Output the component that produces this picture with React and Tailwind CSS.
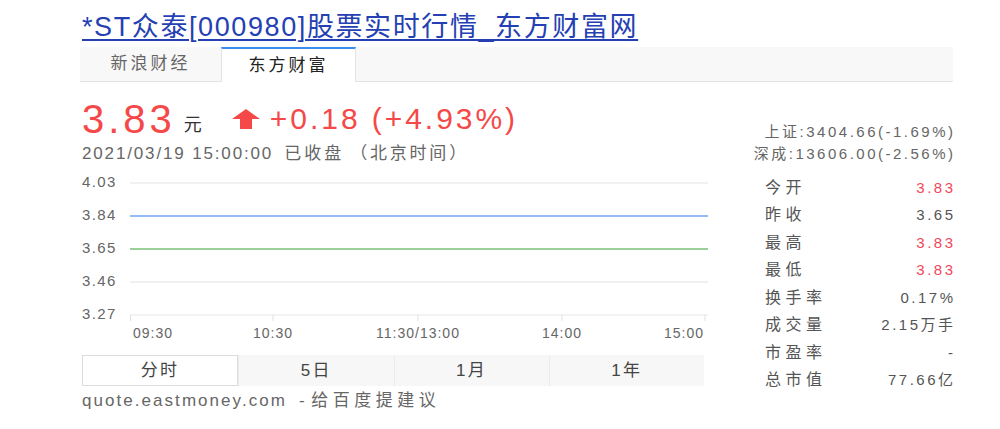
import React from 'react';

const FONT = { fontFamily: '"Liberation Sans", "Noto Sans CJK SC", sans-serif' };

// 行情数据
const stats = [
  { label: '今开', value: '3.83', up: true },
  { label: '昨收', value: '3.65' },
  { label: '最高', value: '3.83', up: true },
  { label: '最低', value: '3.83', up: true },
  { label: '换手率', value: '0.17%' },
  { label: '成交量', value: '2.15万手' },
  { label: '市盈率', value: '-' },
  { label: '总市值', value: '77.66亿' },
];

const yLabels = ['4.03', '3.84', '3.65', '3.46', '3.27'];

const xLabels = [
  { text: '09:30', left: 51 },
  { text: '10:30', left: 171 },
  { text: '11:30/13:00', left: 294 },
  { text: '14:00', left: 460 },
  { text: '15:00', left: 582 },
];

const ranges = ['分时', '5日', '1月', '1年'];

const UpArrow = () => (
  <svg width="28" height="20" viewBox="0 0 28 20" className="shrink-0">
    <polygon points="14,0 28,10 20,10 20,20 8,20 8,10 0,10" fill="#f54848" />
  </svg>
);

const Chart = () => (
  <div className="relative h-[180px] w-[626px]">
    {/* y 轴 */}
    <div className="absolute left-0 top-0 flex flex-col">
      {yLabels.map((v) => (
        <div key={v} className="h-[33px] flex items-center text-[15px] tracking-[1.4px] text-[#666]">
          {v}
        </div>
      ))}
    </div>
    <svg className="absolute left-[48px] top-[16px]" width="580" height="142" viewBox="0 0 580 142">
      <line x1="0" y1="1" x2="578" y2="1" stroke="#ececec" strokeWidth="1.5" />
      <line x1="0" y1="100" x2="578" y2="100" stroke="#ececec" strokeWidth="1.5" />
      <line x1="0" y1="133" x2="578" y2="133" stroke="#e6e6e6" strokeWidth="1" />
      <line x1="0" y1="34" x2="578" y2="34" stroke="#2f7bf2" strokeWidth="1.2" />
      <line x1="0" y1="67" x2="578" y2="67" stroke="#9ad19a" strokeWidth="2" />
      {[0.5, 143, 288, 432, 575].map((x) => (
        <line key={x} x1={x} y1="133" x2={x} y2="139" stroke="#e0e0e0" strokeWidth="1" />
      ))}
    </svg>
    {xLabels.map((l) => (
      <span
        key={l.text}
        className="absolute top-[160px] text-[14px] tracking-[1px] text-[#666] leading-none"
        style={{ left: l.left }}
      >
        {l.text}
      </span>
    ))}
  </div>
);

export default function App() {
  return (
    <div className="w-[1000px] h-[429px] bg-white overflow-hidden" style={FONT}>
      <div className="ml-[80px] w-[873px]">
        {/* 标题 */}
        <div className="pt-[11px] pl-[2px] h-[47px]">
          <a className="text-[27px] leading-[32px] tracking-[1.6px] text-[#2440b3] underline underline-offset-[3px] decoration-[1.5px]">
            *ST众泰[000980]股票实时行情_东方财富网
          </a>
        </div>

        {/* 来源标签 */}
        <div className="flex h-[35px] bg-[#f8f8f8] border-b border-[#e3e3e3]">
          <div className="w-[141px] flex items-center justify-center text-[17px] tracking-[3px] text-[#666]">
            新浪财经
          </div>
          <div className="w-[135px] -mb-px bg-white border-t-2 border-t-[#3b8cf0] border-x border-x-[#e3e3e3] flex items-center justify-center text-[17px] tracking-[3px] text-[#222]">
            东方财富
          </div>
        </div>

        <div className="flex">
          {/* 左侧 */}
          <div className="w-[630px] pl-[2px]">
            <div className="flex items-center h-[58px] pt-[16px] text-[#f54848]">
              <span className="text-[40px] tracking-[4px] leading-none">3.83</span>
              <span className="ml-[8px] mt-[12px] text-[18px] tracking-[2px] text-[#333]">元</span>
              <span className="ml-[28px]"><UpArrow /></span>
              <span className="ml-[10px] text-[30px] tracking-[2.95px] leading-none">+0.18 (+4.93%)</span>
            </div>
            <div className="h-[28px] flex items-center text-[17px] tracking-[1.85px] text-[#666]">
              <span>2021/03/19 15:00:00</span>
              <span className="ml-[11px] tracking-[3px]">已收盘</span>
              <span className="ml-[6px] tracking-[2.8px]">（北京时间）</span>
            </div>
            <div className="mt-[-2px]">
              <Chart />
            </div>
            <div className="flex w-[622px] h-[31px] mt-[9px] bg-[#f7f7f7] text-[17px] tracking-[2.5px] text-[#444]">
              {ranges.map((r, i) => (
                <div
                  key={r}
                  className={
                    i === 0
                      ? 'flex-1 flex items-center justify-center bg-white border border-[#dcdcdc]'
                      : 'flex-1 flex items-center justify-center border-l border-[#ececec]'
                  }
                >
                  {r}
                </div>
              ))}
            </div>
            <div className="mt-[3px] text-[17px] text-[#666] leading-[24px]">
              <span className="tracking-[2.05px]">quote.eastmoney.com</span>
              <span className="ml-[12px] tracking-[1px]">- </span>
              <span className="tracking-[4.5px]">给百度提建议</span>
            </div>
          </div>

          {/* 右侧 */}
          <div className="flex-1 pt-[39px]">
            <div className="flex flex-col items-end text-[15px] tracking-[2.5px] text-[#666] leading-[22px] mr-[-2.5px]">
              <span>上证:3404.66(-1.69%)</span>
              <span>深成:13606.00(-2.56%)</span>
            </div>
            <div className="mt-[9px] pl-[55px]">
              {stats.map((s) => (
                <div key={s.label} className="flex justify-between items-center h-[27.5px] text-[15px] tracking-[2.5px]">
                  <span className="text-[#555] text-[16px] tracking-[4.5px]">{s.label}</span>
                  <span className={s.up ? 'text-[#f2475a] mr-[-2.5px]' : 'text-[#555] mr-[-2.5px]'}>{s.value}</span>
                </div>
              ))}
            </div>
          </div>
        </div>
      </div>
    </div>
  );
}
